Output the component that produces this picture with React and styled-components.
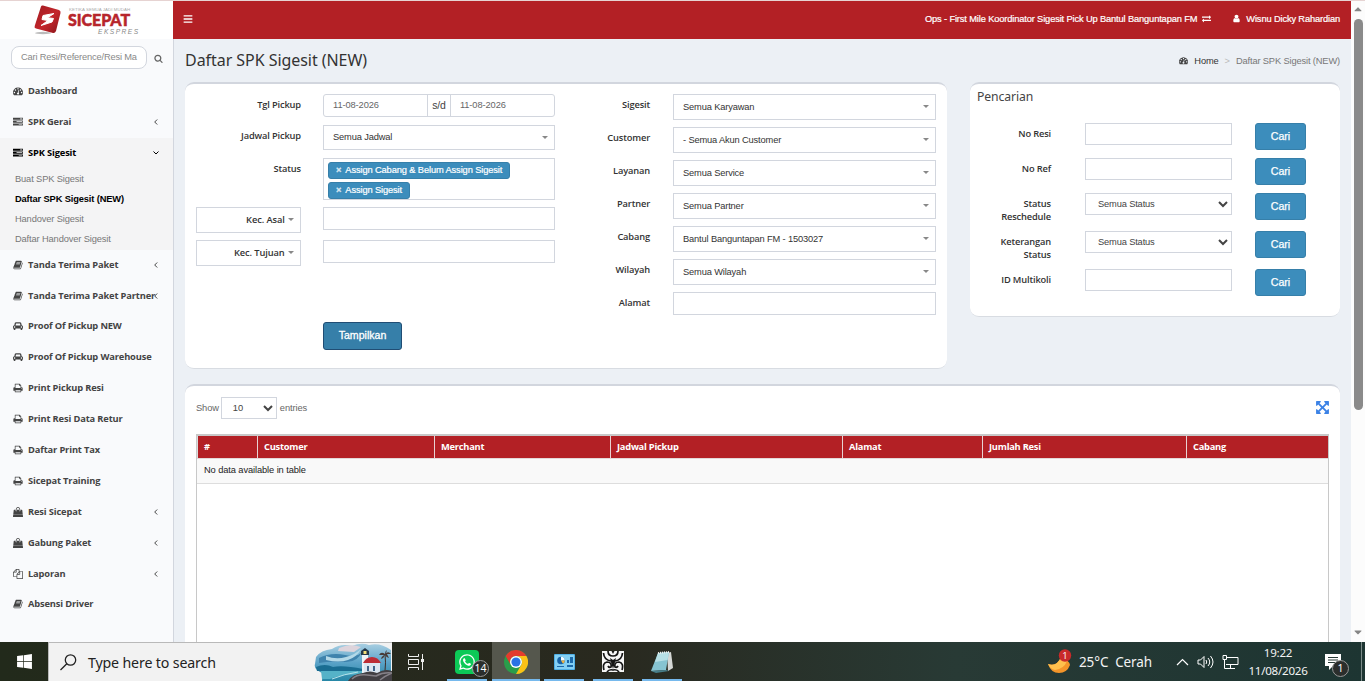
import React from 'react'
import styled, { createGlobalStyle } from 'styled-components'
import { FaBars, FaCaretDown, FaCaretUp, FaWhatsapp, FaWindows } from 'react-icons/fa'

const sans = '"Liberation Sans", Arial, sans-serif'
const open = '"Open Sans", "Noto Sans", sans-serif'

const GlobalStyle = createGlobalStyle`
  * { box-sizing: border-box; }
  body { margin: 0; overflow: hidden; font-family: ${sans}; font-size: 9.3px; letter-spacing: -0.1px; color: #333; }
  button, input, select { font-family: inherit; }
`

const Screen = styled.div`
  display: flex;
  flex-direction: column;
  width: 1365px;
  height: 681px;
  overflow: hidden;
  border-top: 1px solid #e6d3d2;
`
const Page = styled.div`
  display: flex;
  height: 641px;
  flex: none;
  overflow: hidden;
  background: #ecf0f5;
`

/* sidebar */
const Sidebar = styled.aside`
  width: 174px;
  flex: none;
  background: #f9fafc;
  border-right: 1px solid #d2d6de;
`
const LogoBar = styled.div`
  height: 38px;
  background: #fff;
  padding-left: 33px;
`
const SearchForm = styled.div`
  display: flex;
  align-items: center;
  height: 37px;
  padding: 0 0 1px 11px;
  gap: 7px;
  color: #666;
  & > svg { margin-top: 3px; }
`
const SearchInput = styled.div`
  width: 136px;
  height: 23px;
  padding: 0 9px;
  border: 1px solid #d2d6de;
  border-radius: 8px;
  background: #fff;
  color: #888;
  line-height: 20px;
  letter-spacing: -0.17px;
  white-space: nowrap;
  overflow: hidden;
`
const Menu = styled.nav`
  height: 540px;
`
const MenuItem = styled.div`
  display: flex;
  align-items: center;
  height: 30.9px;
  padding: 0 14px 2px 13px;
  font: 700 9.3px ${open};
  letter-spacing: -0.14px;
  color: ${p => (p.$active ? '#000' : '#444')};
  background: ${p => (p.$active ? '#f4f4f5' : 'transparent')};
  white-space: nowrap;
  & > svg { flex: none; margin-top: 1px; }
  & > svg:first-child { margin-right: 5px; }
`
const MenuText = styled.span`
  flex: 1;
  min-width: 0;
`
const SubMenu = styled.div`
  height: 81px;
  background: #f4f4f5;
  padding: 0 0 0 15px;
`
const SubItem = styled.div`
  height: 20.2px;
  line-height: 20px;
  letter-spacing: -0.13px;
  font-weight: ${p => (p.$active ? 700 : 400)};
  color: ${p => (p.$active ? '#000' : '#777')};
`

/* content */
const Main = styled.main`
  width: 1177px;
  flex: none;
`
const TopBar = styled.header`
  display: flex;
  align-items: center;
  height: 38px;
  margin-left: -1px;
  padding: 0 11px 3px 10px;
  background: #b32025;
  color: #fff;
`
const TopText = styled.span`
  display: flex;
  align-items: center;
  gap: 5px;
  margin-left: ${p => p.$gap};
  white-space: nowrap;
  letter-spacing: -0.14px;
  -webkit-text-stroke: 0.2px #fff;
`
const Heading = styled.div`
  display: flex;
  align-items: center;
  justify-content: space-between;
  height: 43px;
  padding: 0 11px;
`
const Title = styled.h1`
  margin: 0;
  padding-bottom: 2px;
  font: 400 16px "Noto Sans", sans-serif;
  letter-spacing: -0.05px;
  color: #333;
`
const Crumbs = styled.div`
  display: flex;
  align-items: center;
  gap: 6px;
  letter-spacing: -0.14px;
  color: #777;
  b { font-weight: 400; color: #333; }
  i { font-style: normal; color: #bbb; }
  svg { color: #444; }
`
const Boxes = styled.div`
  display: flex;
  align-items: flex-start;
  padding: 0 11px;
  gap: 23px;
`
const Box = styled.section`
  width: ${p => p.$w}px;
  height: ${p => p.$h}px;
  background: #fff;
  border-top: 2px solid #d2d6de;
  border-bottom: 1px solid #d8dce2;
  border-radius: 9px;
`
const FilterBox = styled(Box)`
  display: flex;
  padding: 10px 11px;
`
const Column = styled.div`
  width: 370px;
`
const Row = styled.div`
  display: grid;
  grid-template-columns: 105px 232px;
  column-gap: 22px;
  height: ${p => p.$h}px;
  align-items: start;
`
const WideRow = styled(Row)`
  grid-template-columns: 84px 263px;
  column-gap: 23px;
`
const SearchRow = styled(Row)`
  grid-template-columns: 81px 34px 147px 23px 51px;
  column-gap: 0;
  & > :nth-child(2) { grid-column: 3; }
  & > :nth-child(3) { grid-column: 5; }
`
const Label = styled.label`
  padding-top: 4px;
  padding-left: ${p => p.$indent || 0}px;
  text-align: right;
  font: 600 9.3px/13px ${open};
  letter-spacing: -0.15px;
  color: #333;
`
const Field = styled.div`
  display: flex;
  align-items: center;
  justify-content: space-between;
  height: ${p => p.$h || 26}px;
  padding: 0 6px 1px 9px;
  background: #fff;
  border: 1px solid #d2d6de;
  color: #333;
  letter-spacing: -0.15px;
  svg { color: #888; }
`
const KecSelect = styled(Field)`
  justify-content: flex-end;
  gap: 1px;
  font: 600 9.3px ${open};
  letter-spacing: -0.1px;
`
const DateGroup = styled.div`
  display: flex;
  height: 23px;
  border: 1px solid #d2d6de;
  border-radius: 3px;
  line-height: 20px;
  color: #666;
`
const DateInput = styled.div`
  width: 104px;
  padding-left: 9px;
`
const DateSep = styled.div`
  width: 24px;
  text-align: center;
  font-size: 10.500px;
  line-height: 21px;
  color: #444;
  border: solid #d2d6de;
  border-width: 0 1px;
`
const Tags = styled.div`
  display: flex;
  flex-direction: column;
  align-items: flex-start;
  gap: 3px;
  height: 42px;
  padding: 3px 4px;
  border: 1px solid #d2d6de;
`
const Tag = styled.span`
  display: flex;
  gap: 4px;
  height: 17px;
  line-height: 15px;
  padding: 0 7px 0 7px;
  background: #3c8dbc;
  border: 1px solid #367fa9;
  border-radius: 3px;
  color: #fff;
  letter-spacing: -0.12px;
  white-space: nowrap;
  -webkit-text-stroke: 0.2px #fff;
  b { color: #cfe2ee; }
`
const Submit = styled.button`
  width: 79px;
  height: 28px;
  margin: 49px 0 0 127px;
  padding: 0 0 2px;
  border: 1px solid #204d74;
  border-radius: 3px;
  background: #367fa9;
  color: #fff;
  font-size: 10.600px;
  -webkit-text-stroke: 0.3px #fff;
`
const BoxTitle = styled.h3`
  margin: 0 0 17px;
  padding: 5px 0 0 7px;
  height: 22px;
  font: 400 12.200px/16px "Noto Sans", sans-serif;
  color: #444;
`
const CariButton = styled.button`
  height: 27px;
  padding: 0 0 1px;
  border: 1px solid #367fa9;
  border-radius: 3px;
  background: #3c8dbc;
  color: #fff;
  font-size: 10.600px;
  -webkit-text-stroke: 0.25px #fff;
`
const Native = styled(Field)`
  padding: 0 2px 0 ${p => p.$pad || 12}px;
  color: #444;
  svg { color: #444; }
`
const LengthSelect = styled(Native)`
  width: 56px;
  margin-left: -1px;
`

/* table */
const TableBox = styled(Box)`
  margin: 15px 11px 0;
  padding: 11px 11px 0;
`
const TableTools = styled.div`
  display: flex;
  align-items: center;
  height: 22px;
  gap: 3px;
  color: #666;
  & > svg { margin: 0 -1px 1px auto; color: #3b82e6; }
`
const TableWrap = styled.div`
  margin-top: 15px;
  height: 300px;
  border: 1px solid #c8c8c8;
  border-top-width: 2px;
`
const HeadRow = styled.div`
  display: grid;
  grid-template-columns: 60px 177px 176px 232px 140px 204px 1fr;
  height: 22px;
  background: #b32025;
  border-left: 1px solid #ddd;
`
const HeadCell = styled.div`
  padding-left: 6px;
  border-right: 1px solid #e8d2d3;
  font: 700 9.3px/21px ${open};
  letter-spacing: -0.23px;
  color: #fff;
  &:last-child { border-right: 0; }
`
const EmptyRow = styled.div`
  height: 26px;
  padding-left: 7px;
  line-height: 23px;
  background: #f9f9f9;
  border-top: 1px solid #e4d8d8;
  border-bottom: 1px solid #ddd;
  color: #222;
`
const Scrollbar = styled.div`
  display: flex;
  flex-direction: column;
  align-items: center;
  width: 14px;
  padding: 2px 0 4px;
  background: #fcfcfc;
  color: #858585;
`
const Thumb = styled.div`
  width: 9px;
  height: 391px;
  margin: 4px 0 auto;
  border-radius: 5px;
  background: #8a8a8a;
`

/* taskbar */
const Taskbar = styled.footer`
  display: flex;
  align-items: stretch;
  height: 39px;
  flex: none;
  background: linear-gradient(90deg, #222a1b 0%, #29291f 45%, #283a35 70%, #1d3532 100%);
  color: #f3f3f3;
  font-family: "Noto Sans", sans-serif;
`
const Start = styled.div`
  display: grid;
  place-items: center;
  width: 48px;
`
const TaskSearch = styled.div`
  display: flex;
  align-items: center;
  width: 344px;
  padding-left: 11px;
  gap: 11px;
  background: #f2f2f2;
  border: 1px solid #b9b9b9;
  border-width: 1px 0 0 1px;
  color: #222;
  font-size: 14.200px;
  letter-spacing: -0.15px;
  & > svg:last-child { margin-left: auto; }
`
const TaskButton = styled.div`
  position: relative;
  display: grid;
  place-items: center;
  width: 48.7px;
  background: ${p => (p.$active ? '#55574d' : 'transparent')};
  box-shadow: ${p => (p.$active ? 'inset 0 -2px #76b9ed' : 'none')};
  &:nth-child(3) { width: 51px; padding-right: 3px; }
  &::after {
    content: '';
    position: absolute;
    bottom: 0;
    left: 4px;
    width: 40px;
    height: 2px;
    background: ${p => (p.$open ? '#76b9ed' : 'transparent')};
  }
`
const WhatsTile = styled.span`
  display: grid;
  place-items: center;
  width: 24px;
  height: 24px;
  border-radius: 4px;
  background: #0cc957;
  color: #fff;
`
const Badge = styled.span`
  position: absolute;
  left: ${p => p.$x}px;
  top: ${p => p.$y}px;
  width: 17px;
  height: 17px;
  border: 1px solid #999;
  border-radius: 50%;
  background: #2b2e2c;
  color: #fff;
  font-size: 10.500px;
  line-height: 15px;
  text-align: center;
`
const Tray = styled.div`
  display: flex;
  align-items: center;
  margin-left: auto;
`
const Weather = styled.div`
  display: flex;
  align-items: center;
  gap: 7px;
  width: 128px;
  font-size: 13.500px;
  white-space: pre;
  letter-spacing: -0.1px;
`
const TrayIcons = styled.div`
  display: flex;
  align-items: center;
  gap: 8px;
  width: 71px;
`
const Clock = styled.div`
  width: 62px;
  text-align: center;
  font-size: 11.600px;
  line-height: 18px;
  letter-spacing: -0.25px;
`
const Notice = styled.div`
  position: relative;
  width: 52px;
  height: 39px;
  padding: 12px 0 0 16px;
`
const Peek = styled.div`
  width: 4px;
  height: 39px;
  border-left: 1px solid #7b8b88;
`

const paths = {
  dashboard: 'M384 1152q0-53-37.500-90.500t-90.500-37.500-90.500 37.500-37.500 90.500 37.500 90.500 90.500 37.500 90.500-37.500 37.500-90.500zm192-448q0-53-37.500-90.500t-90.500-37.500-90.500 37.500-37.500 90.500 37.500 90.500 90.500 37.500 90.500-37.500 37.500-90.500zm428 481l101-382q6-26-7.500-48.500t-38.500-29.500-48 6.500-30 39.500l-101 382q-60 5-107 43.500t-63 98.500q-20 77 20 146t117 89 146-20 89-117q16-60-6-117t-72-91zm660-33q0-53-37.500-90.500t-90.500-37.500-90.500 37.500-37.500 90.500 37.500 90.500 90.500 37.500 90.500-37.500 37.500-90.500zm-640-640q0-53-37.500-90.500t-90.500-37.500-90.500 37.500-37.500 90.500 37.500 90.500 90.500 37.500 90.500-37.500 37.500-90.500zm448 192q0-53-37.500-90.500t-90.500-37.500-90.500 37.500-37.500 90.500 37.500 90.500 90.500 37.500 90.500-37.500 37.500-90.500zm320 448q0 261-141 483-19 29-54 29h-1402q-35 0-54-29-141-221-141-483 0-182 71-348t191-286 286-191 348-71 348 71 286 191 191 286 71 348z',
  tasks: 'M1024 1408h640v-128h-640v128zm-384-512h1024v-128h-1024v128zm640-512h384v-128h-384v128zm512 832v256q0 26-19 45t-45 19h-1664q-26 0-45-19t-19-45v-256q0-26 19-45t45-19h1664q26 0 45 19t19 45zm0-512v256q0 26-19 45t-45 19h-1664q-26 0-45-19t-19-45v-256q0-26 19-45t45-19h1664q26 0 45 19t19 45zm0-512v256q0 26-19 45t-45 19h-1664q-26 0-45-19t-19-45v-256q0-26 19-45t45-19h1664q26 0 45 19t19 45z',
  book: 'M1703 478q40 57 18 129l-275 906q-19 64-76.500 107.500t-122.500 43.500h-923q-77 0-148.500-53.500t-99.500-131.500q-24-67-2-127 0-4 3-27t4-37q1-8-3-21.500t-3-19.500q2-11 8-21t16.500-23.500 16.500-23.500q23-38 45-91.500t30-91.500q3-10 .5-30t-.5-28q3-11 17-28t17-23q21-36 42-92t25-90q1-9-2.500-32t.5-28q4-13 22-30.500t22-22.500q19-26 42.500-84.500t27.500-96.500q1-8-3-25.500t-2-26.500q2-8 9-18t18-23 17-21q8-12 16.500-30.500t15-35 16-36 19.500-32 26.500-23.500 36-11.500 47.500 5.500l-1 3q38-9 51-9h761q74 0 114 56t18 130l-274 906q-36 119-71.500 153.500t-128.500 34.500h-869q-27 0-38 15-11 16-1 43 24 70 144 70h923q29 0 56-15.500t35-41.500l300-987q7-22 5-57 38 15 59 43zm-1064 2q-4 13 2 22.500t20 9.500h608q13 0 25.500-9.500t16.500-22.500l21-64q4-13-2-22.500t-20-9.500h-608q-13 0-25.500 9.500t-16.500 22.500zm-83 256q-4 13 2 22.500t20 9.500h608q13 0 25.500-9.500t16.500-22.500l21-64q4-13-2-22.500t-20-9.500h-608q-13 0-25.500 9.500t-16.500 22.500z',
  car: 'M480 1088q0-66-47-113t-113-47-113 47-47 113 47 113 113 47 113-47 47-113zm36-320h1016l-89-357q-2-8-14-17.500t-21-9.500h-768q-9 0-21 9.500t-14 17.500zm1372 320q0-66-47-113t-113-47-113 47-47 113 47 113 113 47 113-47 47-113zm160-96v384q0 14-9 23t-23 9h-96v128q0 80-56 136t-136 56-136-56-56-136v-128h-1024v128q0 80-56 136t-136 56-136-56-56-136v-128h-96q-14 0-23-9t-9-23v-384q0-93 65.500-158.500t158.500-65.500h28l105-419q23-94 104-157.500t179-63.500h768q98 0 179 63.500t104 157.500l105 419h28q93 0 158.500 65.500t65.500 158.500z',
  print: 'M448 1536h896v-256h-896v256zm0-640h896v-384h-160q-40 0-68-28t-28-68v-160h-640v640zm1152 64q0-26-19-45t-45-19-45 19-19 45 19 45 45 19 45-19 19-45zm128 0v416q0 13-9.500 22.500t-22.500 9.500h-224v160q0 40-28 68t-68 28h-960q-40 0-68-28t-28-68v-160h-224q-13 0-22.500-9.500t-9.500-22.500v-416q0-79 56.500-135.500t135.500-56.500h64v-544q0-40 28-68t68-28h672q40 0 88 20t76 48l152 152q28 28 48 76t20 88v256h64q79 0 135.500 56.500t56.500 135.500z',
  copy: 'M1696 384q40 0 68 28t28 68v1216q0 40-28 68t-68 28h-960q-40 0-68-28t-28-68v-288h-544q-40 0-68-28t-28-68v-672q0-40 20-88t48-76l408-408q28-28 76-48t88-20h416q40 0 68 28t28 68v328q68-40 128-40h416zm-544 213l-299 299h299v-299zm-640-384l-299 299h299v-299zm196 647l316-316v-416h-384v416q0 40-28 68t-68 28h-416v640h512v-256q0-40 20-88t48-76zm956 804v-1152h-384v416q0 40-28 68t-68 28h-416v640h896z',
  bag: 'M1757 1408l35 313q3 28-16 50-19 21-48 21h-1664q-29 0-48-21-19-22-16-50l35-313h1722zm-93-839l86 775h-1708l86-775q3-24 21-40.500t43-16.500h256v128q0 53 37.500 90.500t90.500 37.500 90.500-37.500 37.500-90.500v-128h384v128q0 53 37.500 90.500t90.500 37.500 90.500-37.500 37.500-90.500v-128h256q25 0 43 16.500t21 40.500zm-384-185v256q0 26-19 45t-45 19-45-19-19-45v-256q0-106-75-181t-181-75-181 75-75 181v256q0 26-19 45t-45 19-45-19-19-45v-256q0-159 112.500-271.500t271.500-112.500 271.500 112.500 112.500 271.500z',
  search: 'M1216 832q0-185-131.500-316.500t-316.500-131.500-316.500 131.500-131.500 316.500 131.500 316.500 316.500 131.500 316.500-131.500 131.500-316.500zm512 832q0 52-38 90t-90 38q-54 0-90-38l-343-342q-179 124-399 124-143 0-273.500-55.500t-225-150-150-225-55.500-273.500 55.500-273.500 150-225 225-150 273.500-55.500 273.500 55.500 225 150 150 225 55.500 273.500q0 220-124 399l343 343q37 37 37 90z',
  user: 'M1536 1399q0 109-62.500 187t-150.500 78h-854q-88 0-150.500-78t-62.500-187q0-85 8.500-160.500t31.500-152 58.500-131 94-89 134.500-34.500q131 128 313 128t313-128q76 0 134.500 34.500t94 89 58.500 131 31.500 152 8.500 160.500zm-256-887q0 159-112.500 271.500t-271.500 112.500-271.500-112.500-112.500-271.500 112.500-271.500 271.500-112.500 271.500 112.500 112.500 271.500z',
  exchange: 'M1792 1184v192q0 13-9.500 22.500t-22.500 9.500h-1376v192q0 13-9.500 22.500t-22.500 9.500q-12 0-24-10l-319-320q-9-9-9-22 0-14 9-23l320-320q9-9 23-9 13 0 22.500 9.500t9.500 22.500v192h1376q13 0 22.500 9.500t9.500 22.500zm0-544q0 14-9 23l-320 320q-9 9-23 9-13 0-22.500-9.500t-9.500-22.500v-192h-1376q-13 0-22.500-9.500t-9.500-22.500v-192q0-13 9.500-22.500t22.500-9.500h1376v-192q0-14 9-23t23-9q12 0 24 10l319 319q9 9 9 23z',
  expand: 'M1411 541l-355 355 355 355 144-144q29-31 70-14 39 17 39 59v448q0 26-19 45t-45 19h-448q-42 0-59-40-17-39 14-69l144-144-355-355-355 355 144 144q31 30 14 69-17 40-59 40h-448q-26 0-45-19t-19-45v-448q0-42 40-59 39-17 69 14l144 144 355-355-355-355-144 144q-19 19-45 19-12 0-24-5-40-17-40-59v-448q0-26 19-45t45-19h448q42 0 59 40 17 39-14 69l-144 144 355 355 355-355-144-144q-31-30-14-69 17-40 59-40h448q26 0 45 19t19 45v448q0 42-39 59-13 5-25 5-26 0-45-19z'
}

const Glyph = ({ name, size = 10 }) => (
  <svg width={size} height={size} viewBox={name === 'car' ? '0 0 2048 1792' : '0 0 1792 1792'} fill="currentColor">
    <path d={paths[name]} />
  </svg>
)

const Angle = ({ down }) => (
  <svg width="6" height="6" viewBox="0 0 6 6" fill="none" stroke="currentColor">
    <path d={down ? 'M.5 1.500L3 4l2.500-2.500' : 'M4.200 .5L1.700 3l2.500 2.500'} />
  </svg>
)

const Chevron = () => (
  <svg width="12" height="8" viewBox="0 0 12 8" fill="none" stroke="currentColor" strokeWidth="2">
    <path d="M2 2l4 4 4-4" />
  </svg>
)

const Caret = () => (
  <svg width="6" height="3" viewBox="0 0 6 3" fill="currentColor"><path d="M0 0h6L3 3z" /></svg>
)

const Logo = () => (
  <svg width="108" height="38" viewBox="0 0 108 38">
    <defs>
      <linearGradient id="red" x1="0" y1="0" x2="1" y2="1">
        <stop offset="0" stopColor="#9e1b20" />
        <stop offset=".55" stopColor="#c4262c" />
        <stop offset="1" stopColor="#871519" />
      </linearGradient>
    </defs>
    <ellipse cx="10" cy="32" rx="8" ry="1.200" fill="#bbb" />
    <path d="M8 5.500Q8.500 4 10 4.500L26 9Q28 10 27.500 12L23 30Q22 32.500 20 32L3 27.500Q1 27 1.700 25z" fill="url(#red)" />
    <path d="M21 12.500l-11 2-1 4 6 1-7 5 11-3.500 1.500-3.500-6-.8z" fill="#fff" stroke="#fff" strokeLinejoin="round" />
    <text x="36" y="9.500" fontFamily={sans} fontSize="4.400" fill="#aaa" textLength="61">KETIKA SEMUA JADI MUDAH</text>
    <text x="35" y="25" fontFamily="Lato, sans-serif" fontWeight="900" fontSize="17.500" fill="#b7252b" stroke="#b7252b" strokeWidth=".5" textLength="62" lengthAdjust="spacingAndGlyphs">SICEPAT</text>
    <text x="65" y="32.500" fontFamily={sans} fontStyle="italic" fontSize="6.600" fill="#888" textLength="40">EKSPRES</text>
  </svg>
)

const Lighthouse = () => (
  <svg width="78" height="38" viewBox="0 0 78 38">
    <defs>
      <linearGradient id="sky" x1="0" y1="0" x2="0" y2="1">
        <stop offset="0" stopColor="#a9cfe2" />
        <stop offset=".5" stopColor="#5ba3c8" />
        <stop offset="1" stopColor="#2687a6" />
      </linearGradient>
    </defs>
    <path d="M2 14Q7 7 18 6 27 0 38 3 47-1 55 2 66-1 77 7V38H8Q8 33 11 31-1 27 1 21z" fill="url(#sky)" />
    <path d="M25 5Q36 0 47 4L40 9 24 8z" fill="#ddd4dc" />
    <path d="M5 15q12-6 26-3t17-4q-4 12-18 11T5 20z" fill="#3f83ad" />
    <path d="M12 13q10 4 20 1t15-8q-4 8-13 11t-22 0z" fill="#b4d9e8" />
    <path d="M2 24q9-4 17 0 10-2 30 2v2H3z" fill="#1a6d92" />
    <path d="M7 28h45v4Q30 30 16 36H8z" fill="#55b2c8" />
    <path d="M44 29q-14 2-26 7" fill="none" stroke="#b4e1e9" />
    <path d="M48 12h6v18h-6z" fill="#eef3f8" />
    <path d="M47 12V8l4-3 4 3v4z" fill="#24384b" />
    <path d="M49.500 8h3v3h-3z" fill="#f2dd78" />
    <path d="M50 20h16v10H50z" fill="#dce7f2" />
    <path d="M49 20q3-6 9-6t9 6z" fill="#bd2d36" />
    <path d="M53 23h2v5h-2zm6 0h2v5h-2z" fill="#42658a" />
    <path d="M71 28q1-8 0-17" stroke="#3d2d27" fill="none" />
    <path d="M71 11q-4-3-6 1 3 0 5 0-3 2-3 4 3-1 4-4 2 3 4 3l-2-4h4q-2-3-5-1l1-3q-2 1-2 4z" fill="#483c38" />
    <path d="M34 38q4-7 15-8 7-3 14 0 8-5 15-2v10z" fill="#434044" />
    <path d="M38 36q5-5 15-4l9 1q7-4 16-3-7 3-12 7" fill="none" stroke="#858087" strokeWidth="1.500" />
  </svg>
)

const Chrome = () => (
  <svg width="24" height="24" viewBox="0 0 24 24">
    <circle cx="12" cy="12" r="12" fill="#2a9d4a" />
    <path d="M1.600 6A12 12 0 0 1 22.400 6H12a6 6 0 0 0-5.200 9z" fill="#e33b2e" />
    <path d="M22.400 6A12 12 0 0 1 12 24l5.200-9A6 6 0 0 0 12 6z" fill="#fbc116" />
    <circle cx="12" cy="12" r="6" fill="#fff" />
    <circle cx="12" cy="12" r="4.600" fill="#2a72e5" />
  </svg>
)

const TaskView = () => (
  <svg width="18" height="16" viewBox="0 0 18 16" fill="none" stroke="#eee">
    <path d="M1.500 0v2.500h10V0M1.500 16v-2.500h10V16M1.500 5.500h10v5h-10zM15.500 0v16" />
    <path d="M14 5h3v3h-3z" fill="#eee" stroke="none" />
  </svg>
)

const Panel = () => (
  <svg width="21" height="16" viewBox="0 0 21 16">
    <rect width="21" height="16" rx="1" fill="#51b0e6" />
    <rect x="1" y="1" width="19" height="14" fill="#83d0f5" />
    <circle cx="7" cy="6.500" r="3.800" fill="#1763a8" />
    <path d="M7 6.500V2.700a3.800 3.800 0 0 1 3.800 3.800z" fill="#f4f9fc" />
    <path d="M7 6.500h3.800A3.800 3.800 0 0 1 9 9.700z" fill="#f2b33c" />
    <path d="M13 9V6h2v3zm3 0V3h3v6zM3 12h7v1H3zm10-1h6v2h-6z" fill="#1c69aa" />
  </svg>
)

const Emblem = () => (
  <svg width="22" height="21" viewBox="0 0 22 21">
    <path fill="#f6f6f6" d="M0 0h22v21H0z" />
    <g fill="none" stroke="#151515" strokeWidth="1.700">
      <path d="M6 0q0 5 5 5t5-5M1.500 2Q2 9 9 10M20.500 2q-.5 7-7.500 8M2 19q-2-7 3-8 5 0 4 5-2 1-3-1M20 19q2-7-3-8-5 0-4 5 2 1 3-1M5 21q2-3 6-2 4-1 6 2" />
    </g>
    <path d="M8 7l3 2 3-2-1.500 6L11 18l-1.500-5zM9.500 0h3L11 3z" fill="#151515" />
  </svg>
)

const Notepad = () => (
  <svg width="24" height="24" viewBox="0 0 24 24">
    <path d="M17 3l4-1 2 16-5 3z" fill="#d5d8d6" />
    <path d="M8 3l11-1-3 18-15 1z" fill="#86c4d1" />
    <path d="M8 3l11-1-1.500 8L5 12z" fill="#b7e0e6" />
    <path d="M1 21l15-1 3 1-13 2z" fill="#477f8b" />
    <path d="M8 3l11-1" stroke="#eee" strokeDasharray="1 1" strokeWidth="2" />
  </svg>
)

const Moon = () => (
  <svg width="24" height="26" viewBox="0 0 24 26">
    <path d="M0 15q9 3 13-7 8 3 9 8-3 8-11 8-8 0-11-9z" fill="#f4952a" />
    <path d="M0 15q9 3 13-7 4 1 6 4-3 8-12 9-5-1-7-6z" fill="#ffc04d" />
    <circle cx="17" cy="6.500" r="6.200" fill="#c92a2a" />
    <text x="17" y="10" textAnchor="middle" fontFamily={open} fontSize="9.500" fill="#fff">1</text>
  </svg>
)

const menuTop = [
  { icon: 'dashboard', text: 'Dashboard' },
  { icon: 'tasks', text: 'SPK Gerai', more: true }
]
const subMenu = ['Buat SPK Sigesit', 'Daftar SPK Sigesit (NEW)', 'Handover Sigesit', 'Daftar Handover Sigesit']
const menuBottom = [
  { icon: 'book', text: 'Tanda Terima Paket', more: true },
  { icon: 'book', text: 'Tanda Terima Paket Partner', more: true },
  { icon: 'car', text: 'Proof Of Pickup NEW' },
  { icon: 'car', text: 'Proof Of Pickup Warehouse' },
  { icon: 'print', text: 'Print Pickup Resi' },
  { icon: 'print', text: 'Print Resi Data Retur' },
  { icon: 'print', text: 'Daftar Print Tax' },
  { icon: 'print', text: 'Sicepat Training' },
  { icon: 'bag', text: 'Resi Sicepat', more: true },
  { icon: 'bag', text: 'Gabung Paket', more: true },
  { icon: 'copy', text: 'Laporan', more: true },
  { icon: 'book', text: 'Absensi Driver' }
]
const filters = [
  ['Sigesit', 'Semua Karyawan'],
  ['Customer', '- Semua Akun Customer'],
  ['Layanan', 'Semua Service'],
  ['Partner', 'Semua Partner'],
  ['Cabang', 'Bantul Banguntapan FM - 1503027'],
  ['Wilayah', 'Semua Wilayah']
]
const searches = [
  { label: 'No Resi', h: 35 },
  { label: 'No Ref', h: 35 },
  { label: 'Status Reschedule', h: 38, select: true },
  { label: 'Keterangan Status', h: 38, select: true },
  { label: 'ID Multikoli', h: 30 }
]
const columns = ['#', 'Customer', 'Merchant', 'Jadwal Pickup', 'Alamat', 'Jumlah Resi', 'Cabang']

const renderItem = ({ icon, text, more }) => (
  <MenuItem key={text}>
    <Glyph name={icon} />
    <MenuText>{text}</MenuText>
    {more && <Angle />}
  </MenuItem>
)

const SideMenu = () => (
  <Sidebar>
    <LogoBar><Logo /></LogoBar>
    <SearchForm>
      <SearchInput>Cari Resi/Reference/Resi Ma</SearchInput>
      <Glyph name="search" size={9} />
    </SearchForm>
    <Menu>
      {menuTop.map(renderItem)}
      <MenuItem $active>
        <Glyph name="tasks" />
        <MenuText>SPK Sigesit</MenuText>
        <Angle down />
      </MenuItem>
      <SubMenu>
        {subMenu.map((text, i) => <SubItem key={text} $active={i === 1}>{text}</SubItem>)}
      </SubMenu>
      {menuBottom.map(renderItem)}
    </Menu>
  </Sidebar>
)

const FilterForm = () => (
  <FilterBox $w={762} $h={287}>
    <Column>
      <Row $h={31}>
        <Label>Tgl Pickup</Label>
        <DateGroup>
          <DateInput>11-08-2026</DateInput>
          <DateSep>s/d</DateSep>
          <DateInput>11-08-2026</DateInput>
        </DateGroup>
      </Row>
      <Row $h={33}>
        <Label>Jadwal Pickup</Label>
        <Field $h={25}>Semua Jadwal <Caret /></Field>
      </Row>
      <Row $h={49}>
        <Label>Status</Label>
        <Tags>
          <Tag><b>×</b>Assign Cabang &amp; Belum Assign Sigesit</Tag>
          <Tag><b>×</b>Assign Sigesit</Tag>
        </Tags>
      </Row>
      <Row $h={33}>
        <KecSelect>Kec. Asal&nbsp;<Caret /></KecSelect>
        <Field $h={23} />
      </Row>
      <Row $h={33}>
        <KecSelect>Kec. Tujuan&nbsp;<Caret /></KecSelect>
        <Field $h={23} />
      </Row>
      <Submit>Tampilkan</Submit>
    </Column>
    <Column>
      {filters.map(([label, value]) => (
        <WideRow key={label} $h={33}>
          <Label>{label}</Label>
          <Field>{value} <Caret /></Field>
        </WideRow>
      ))}
      <WideRow $h={33}>
        <Label>Alamat</Label>
        <Field $h={23} />
      </WideRow>
    </Column>
  </FilterBox>
)

const SearchBox = () => (
  <Box $w={370} $h={235}>
    <BoxTitle>Pencarian</BoxTitle>
    {searches.map(({ label, h, select }) => (
      <SearchRow key={label} $h={h}>
        <Label $indent={24}>{label}</Label>
        {select ? <Native $h={22}>Semua Status <Chevron /></Native> : <Field $h={22} />}
        <CariButton>Cari</CariButton>
      </SearchRow>
    ))}
  </Box>
)

export default function App() {
  return (
    <Screen>
      <GlobalStyle />
      <Page>
        <SideMenu />
        <Main>
          <TopBar>
            <FaBars size={10} />
            <TopText $gap="auto">
              Ops - First Mile Koordinator Sigesit Pick Up Bantul Banguntapan FM
              <Glyph name="exchange" size={9} />
            </TopText>
            <TopText $gap="21px"><Glyph name="user" size={9} />Wisnu Dicky Rahardian</TopText>
          </TopBar>
          <Heading>
            <Title>Daftar SPK Sigesit (NEW)</Title>
            <Crumbs>
              <Glyph name="dashboard" size={9} />
              <b>Home</b>
              <i>&gt;</i>
              <span>Daftar SPK Sigesit (NEW)</span>
            </Crumbs>
          </Heading>
          <Boxes>
            <FilterForm />
            <SearchBox />
          </Boxes>
          <TableBox $w={1155} $h={330}>
            <TableTools>
              Show
              <LengthSelect $h={22} $pad={11}>10 <Chevron /></LengthSelect>
              entries
              <Glyph name="expand" size={15} />
            </TableTools>
            <TableWrap>
              <HeadRow>
                {columns.map(c => <HeadCell key={c}>{c}</HeadCell>)}
              </HeadRow>
              <EmptyRow>No data available in table</EmptyRow>
            </TableWrap>
          </TableBox>
        </Main>
        <Scrollbar>
          <FaCaretUp size={12} />
          <Thumb />
          <FaCaretDown size={12} />
        </Scrollbar>
      </Page>
      <Taskbar>
        <Start><FaWindows size={17} color="#fff" /></Start>
        <TaskSearch>
          <svg width="17" height="17" viewBox="0 0 17 17" fill="none" stroke="#222" strokeWidth="1.300">
            <circle cx="10.500" cy="6" r="5.200" />
            <path d="M6.800 9.700L.5 16" />
          </svg>
          Type here to search
          <Lighthouse />
        </TaskSearch>
        <TaskButton><TaskView /></TaskButton>
        <TaskButton $open>
          <WhatsTile><FaWhatsapp size={18} /></WhatsTile>
          <Badge $x={29} $y={18}>14</Badge>
        </TaskButton>
        <TaskButton $active><Chrome /></TaskButton>
        <TaskButton $open><Panel /></TaskButton>
        <TaskButton $open><Emblem /></TaskButton>
        <TaskButton $open><Notepad /></TaskButton>
        <Tray>
          <Weather><Moon />{'25°C  Cerah'}</Weather>
          <TrayIcons>
            <svg width="13" height="8" viewBox="0 0 13 8" fill="none" stroke="#fff" strokeWidth="1.200"><path d="M1 7l5.500-5.500L12 7" /></svg>
            <svg width="17" height="14" viewBox="0 0 17 14" fill="none" stroke="#fff">
              <path d="M1 5h2.500L7 1.500v11L3.500 9H1zM9 5q1.500 2 0 4M11 3q3.500 4 0 8M13.500 1q5 6 0 12" />
            </svg>
            <svg width="17" height="14" viewBox="0 0 17 14" fill="none" stroke="#fff">
              <path d="M5 2.500h11v7H4M8.500 9.500v4M5 13.500h8M1 .5h3.500v4H1zM2.500 4.500v9H5" />
            </svg>
          </TrayIcons>
          <Clock>19:22<br />11/08/2026</Clock>
          <Notice>
            <svg width="17" height="17" viewBox="0 0 17 17">
              <path d="M0 0h16v12H8l-4 4v-4H0z" fill="#fff" />
              <path d="M3 3.500h10M3 6h10M3 8.500h7" stroke="#263935" />
            </svg>
            <Badge $x={23} $y={18}>1</Badge>
          </Notice>
          <Peek />
        </Tray>
      </Taskbar>
    </Screen>
  )
}
